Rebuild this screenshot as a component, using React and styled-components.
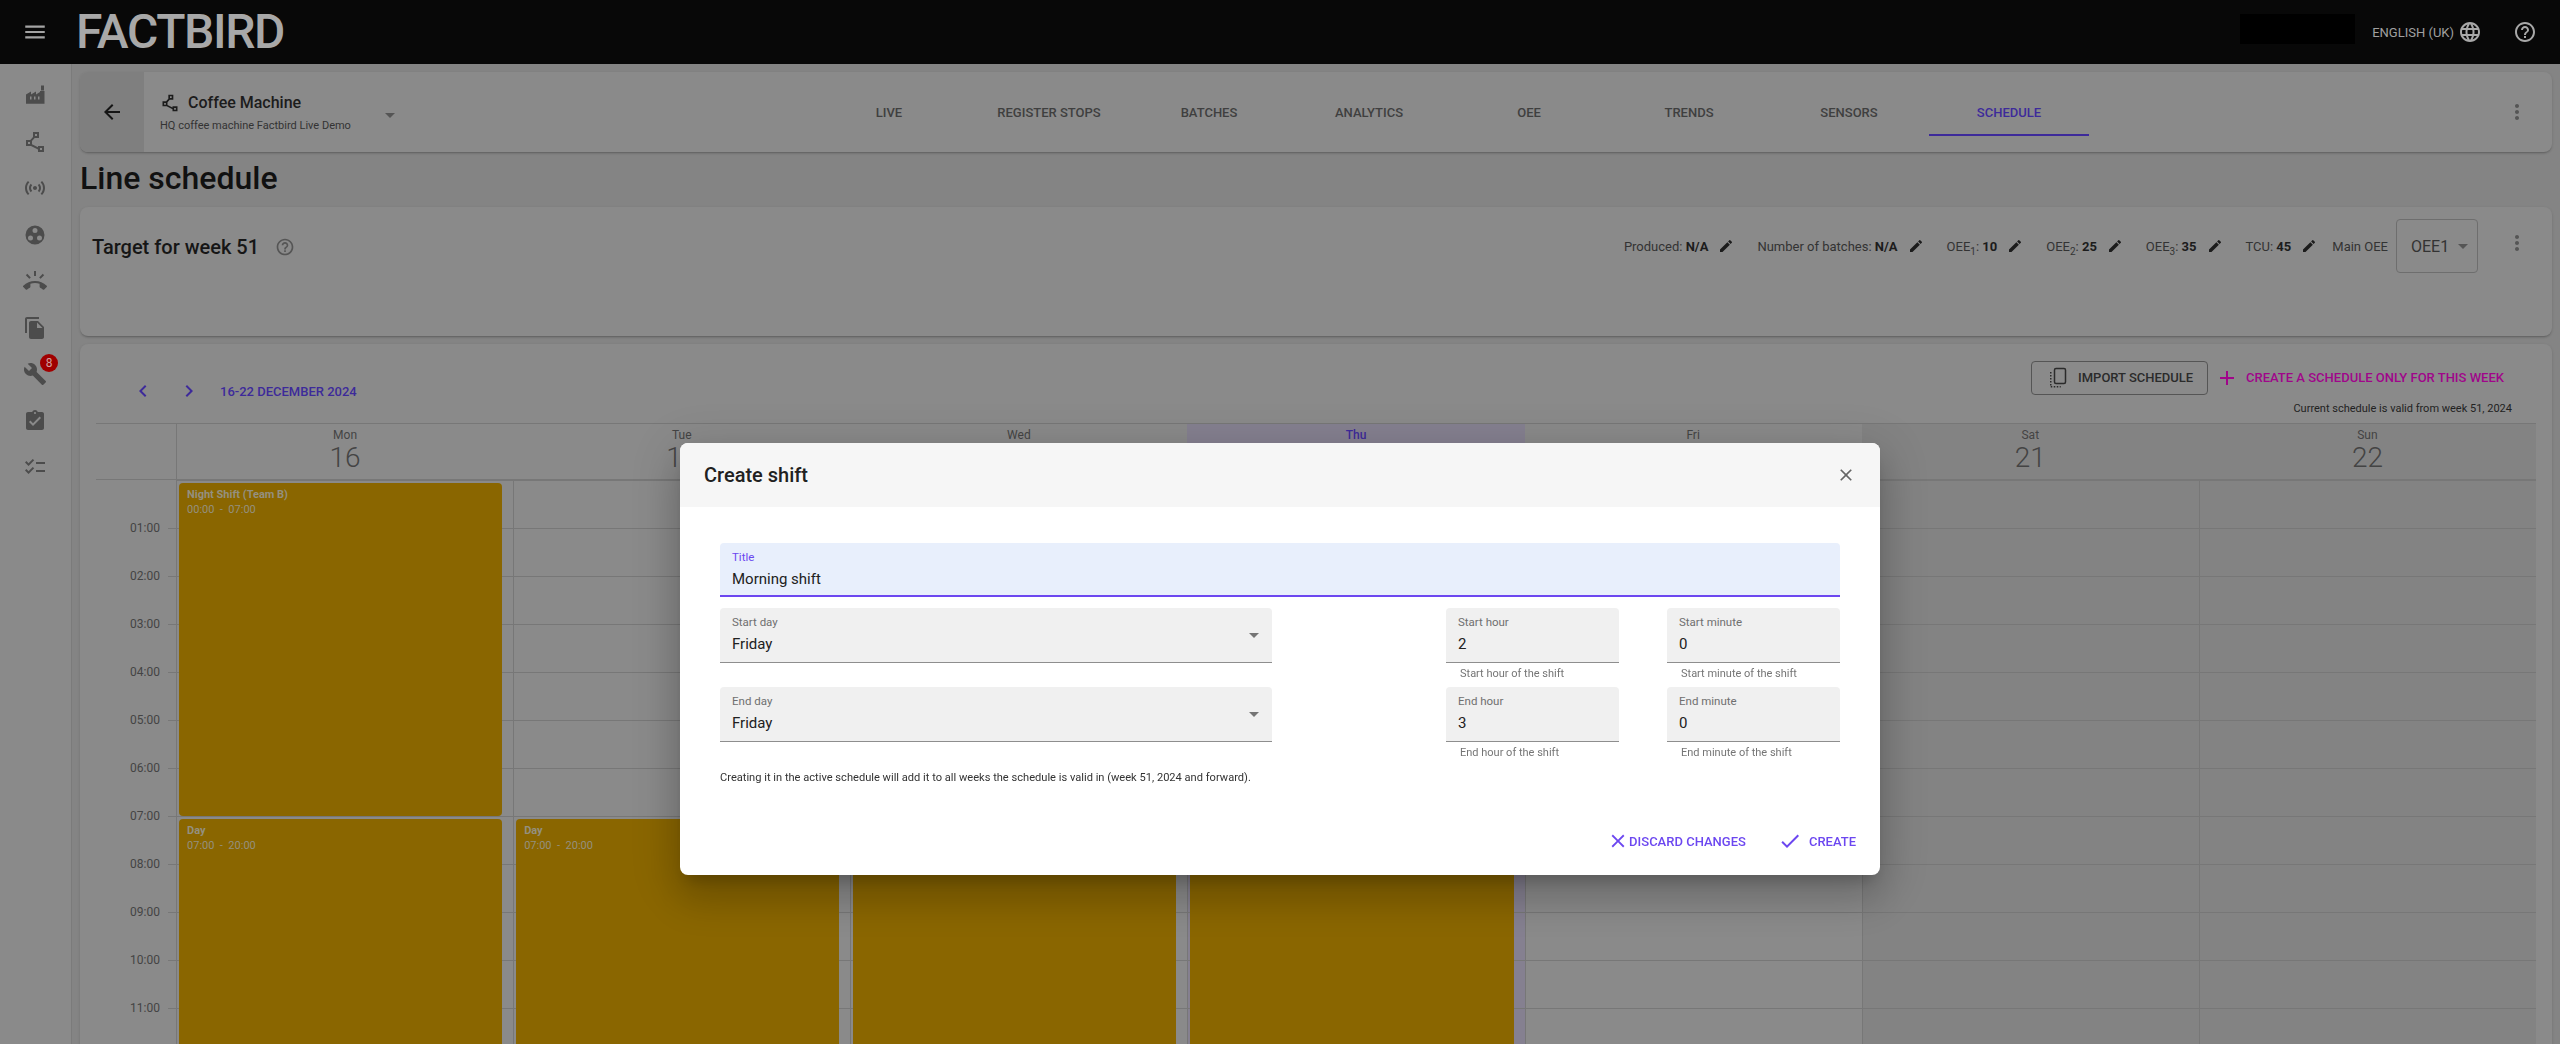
import React from 'react';
import styled, { createGlobalStyle } from 'styled-components';
import {
  MdMenu, MdArrowBack, MdMoreVert, MdEdit, MdHelpOutline, MdLanguage, MdClose, MdCheck, MdAdd,
  MdChevronLeft, MdChevronRight, MdArrowDropDown, MdSensors, MdRingVolume, MdFileCopy, MdBuild,
  MdAssignmentTurnedIn, MdChecklist, MdOutlinePolyline,
} from 'react-icons/md';

const GlobalStyle = createGlobalStyle`
  html, body { margin: 0; padding: 0; background: #fff; overflow: hidden; }
  body { font-family: Roboto, "Liberation Sans", sans-serif; }
  * { box-sizing: border-box; }
`;

const Page = styled.div`
  width: 2560px;
  height: 1044px;
  overflow: hidden;
  display: flex;
  flex-direction: column;
  background: #848484;
  color: #222;
`;

const TopBar = styled.header`
  flex: none;
  height: 64px;
  display: flex;
  align-items: center;
  background: #080808;
  color: #a4a4a4;
  padding: 0 23px 0 22px;
`;

const Logo = styled.span`
  margin-left: 28px;
  font-size: 48px;
  font-weight: 500;
  line-height: 64px;
  letter-spacing: -1.4px;
  color: #a8a8a8;
`;

const RedactedBox = styled.div`
  width: 115px;
  height: 30px;
  margin-left: auto;
  margin-top: -7px;
  background: #000;
`;

const Lang = styled.span`
  margin-left: 17px;
  font-size: 13px;
  color: #a0a0a0;
  text-transform: uppercase;
`;

const TopIcons = styled.span`
  display: inline-flex;
  align-items: center;
  margin-left: ${(p) => p.$gap}px;
  color: #a8a8a8;
`;

const Body = styled.div`
  flex: 1;
  display: flex;
  min-height: 0;
`;

const Sidebar = styled.nav`
  flex: none;
  width: 72px;
  padding-top: 8px;
  background: #8a8a8a;
  border-right: 1px solid #7b7b7b;
  display: flex;
  flex-direction: column;
  align-items: center;
`;

const NavItem = styled.div`
  position: relative;
  flex: none;
  height: 46.5px;
  width: 100%;
  padding-right: 1px;
  display: flex;
  align-items: center;
  justify-content: center;
  color: #4c4c4c;
`;

const Badge = styled.span`
  position: absolute;
  top: 3px;
  left: 40px;
  width: 18px;
  height: 18px;
  border-radius: 50%;
  background: #a00000;
  color: #cfa0a0;
  font-size: 12px;
  line-height: 18px;
  text-align: center;
`;

const Content = styled.main`
  flex: 1;
  min-width: 0;
  padding: 8px 8px 0;
  display: flex;
  flex-direction: column;
`;

const Card = styled.section`
  flex: none;
  background: #8a8a8a;
  border-radius: 8px;
  box-shadow: 0 2px 2px -1px rgba(0, 0, 0, 0.2), 0 1px 3px rgba(0, 0, 0, 0.12);
`;

const HeaderCard = styled(Card)`
  height: 80px;
  display: flex;
  overflow: hidden;
`;

const BackArea = styled.div`
  flex: none;
  width: 64px;
  background: #7f7f7f;
  display: flex;
  align-items: center;
  justify-content: center;
  color: #151515;
`;

const LineSelect = styled.div`
  position: relative;
  flex: none;
  width: 665px;
  padding: 19px 0 0 16px;
`;

const LineName = styled.div`
  display: flex;
  align-items: center;
  gap: 8px;
  font-size: 16px;
  font-weight: 500;
  line-height: 24px;
  color: #1c1c1c;
`;

const LineSub = styled.div`
  margin-top: 3px;
  font-size: 11px;
  line-height: 16px;
  color: #333;
`;

const LineArrow = styled.span`
  position: absolute;
  left: 234px;
  top: 31px;
  display: flex;
  color: #555;
`;

const Tabs = styled.div`
  display: flex;
`;

const Tab = styled.div`
  position: relative;
  width: 160px;
  display: flex;
  align-items: center;
  justify-content: center;
  font-size: 13px;
  font-weight: 500;
  text-transform: uppercase;
  color: ${(p) => (p.$active ? '#3d2a9a' : '#3f3f3f')};
  &::after {
    content: '';
    display: ${(p) => (p.$active ? 'block' : 'none')};
    position: absolute;
    left: 0;
    right: 0;
    bottom: 16px;
    height: 2px;
    background: #3d2a9a;
  }
`;

const DotsButton = styled.span`
  margin-left: auto;
  margin-right: ${(p) => p.$right}px;
  align-self: center;
  display: flex;
  color: #555;
`;

const PageTitle = styled.h1`
  flex: none;
  margin: 0 0 2px;
  height: 53px;
  font-size: 32px;
  font-weight: 500;
  line-height: 53px;
  color: #111;
`;

const TargetCard = styled(Card)`
  height: 129px;
  padding: 12px 0 0 12px;
  margin-bottom: 8px;
  display: flex;
  align-items: flex-start;
`;

const TargetTitle = styled.div`
  height: 56px;
  display: flex;
  align-items: center;
  gap: 16px;
  font-size: 20px;
  font-weight: 500;
  color: #161616;
  svg { color: #555; }
`;

const Stats = styled.div`
  margin-left: auto;
  height: 54px;
  display: flex;
  align-items: center;
  font-size: 13px;
  color: #333;
`;

const Stat = styled.div`
  display: flex;
  align-items: center;
  margin-right: ${(p) => p.$gap || 23}px;
  white-space: pre;
  b { font-weight: 700; color: #1c1c1c; }
  sub { font-size: 10px; line-height: 0; }
`;

const PencilIcon = styled(MdEdit)`
  margin-left: 10px;
  color: #1c1c1c;
`;

const MainLabel = styled.span`
  margin-right: 8px;
`;

const OeeSelect = styled.div`
  width: 82px;
  height: 54px;
  border: 1px solid #6e6e6e;
  border-radius: 4px;
  padding-left: 14px;
  display: flex;
  align-items: center;
  font-size: 16px;
  color: #333;
  svg { color: #555; margin-left: 2px; }
`;

const TargetDots = styled(DotsButton)`
  margin-left: 27px;
  margin-top: 12px;
  align-self: flex-start;
`;

const CalendarCard = styled(Card)`
  flex: 1;
  min-height: 0;
  margin-bottom: -8px;
  padding-top: 17px;
  overflow: hidden;
`;

const CalendarBar = styled.div`
  display: flex;
  align-items: flex-start;
  height: 34px;
  padding: 0 48px 0 40px;
`;

const DateNav = styled.div`
  margin-top: 18px;
  display: flex;
  align-items: center;
`;

const NavChevron = styled.span`
  width: 46px;
  display: flex;
  justify-content: center;
  color: #3d2a9a;
`;

const DateRange = styled.span`
  margin-left: 8px;
  font-size: 13px;
  font-weight: 500;
  text-transform: uppercase;
  color: #3d2a9a;
`;

const ImportButton = styled.button`
  margin-left: auto;
  flex: none;
  width: 177px;
  height: 34px;
  padding: 0 0 1px 14px;
  display: flex;
  align-items: center;
  gap: 8px;
  background: transparent;
  border: 1px solid #555;
  border-radius: 4px;
  font-family: inherit;
  font-size: 13px;
  font-weight: 500;
  color: #2b2b2b;
  text-transform: uppercase;
`;

const CreateOnce = styled.span`
  margin-left: 7px;
  height: 33px;
  display: flex;
  align-items: center;
  gap: 7px;
  font-size: 13px;
  font-weight: 500;
  color: #a0068a;
  text-transform: uppercase;
`;

const ValidNote = styled.div`
  padding-right: 40px;
  margin-top: 5px;
  height: 23px;
  font-size: 11px;
  line-height: 18px;
  text-align: right;
  color: #222;
`;

const Grid = styled.div`
  margin: 0 16px;
  display: grid;
  grid-template-columns: 80px repeat(7, 1fr);
`;

const HeadCorner = styled.div`
  height: 57px;
  border-top: 1px solid #777;
  border-bottom: 1px solid #777;
`;

const HeadCell = styled(HeadCorner)`
  text-align: center;
  padding-top: 2px;
  background: ${(p) => p.$bg || 'transparent'};
  border-left: ${(p) => (p.$first ? '1px solid #777' : '0')};
  color: ${(p) => (p.$today ? '#3d2a9a' : '#444')};
`;

const DayName = styled.div`
  font-size: 12px;
  line-height: 18px;
  font-weight: ${(p) => (p.$today ? 500 : 400)};
`;

const DayNumber = styled.div`
  font-size: 28px;
  line-height: 28px;
  font-weight: 300;
`;

const TimeGutter = styled.div`
  padding-top: 39px;
`;

const TimeRow = styled.div`
  height: 48px;
  display: flex;
  justify-content: flex-end;
  gap: 8px;
  font-size: 12px;
  line-height: 18px;
  color: #444;
  &::after {
    content: '';
    width: 8px;
    height: 1px;
    margin-top: 9px;
    background: #777;
  }
`;

const DayColumn = styled.div`
  position: relative;
  height: 720px;
  border-left: 1px solid #777;
  background-color: ${(p) => p.$bg || 'transparent'};
  background-image: linear-gradient(#777 1px, transparent 1px);
  background-size: 100% 48px;
`;

const Shift = styled.div`
  position: absolute;
  left: 2px;
  right: 11px;
  top: ${(p) => p.$start * 48 + 3}px;
  height: ${(p) => (p.$end - p.$start) * 48 - 3}px;
  padding: 4px 8px;
  border-radius: 4px;
  background: #8a6600;
  color: #94907f;
  font-size: 11px;
  line-height: 15px;
`;

const ShiftTitle = styled.div`
  font-weight: 700;
`;

const Overlay = styled.div`
  position: fixed;
  top: 0;
  left: 0;
  width: 2560px;
  height: 1044px;
  padding-top: 443px;
  display: flex;
  justify-content: center;
  align-items: flex-start;
`;

const Modal = styled.div`
  width: 1200px;
  height: 432px;
  background: #fff;
  border-radius: 8px;
  overflow: hidden;
  box-shadow: 0 11px 15px -7px rgba(0, 0, 0, 0.2), 0 24px 38px 3px rgba(0, 0, 0, 0.14), 0 9px 46px 8px rgba(0, 0, 0, 0.12);
`;

const ModalHeader = styled.div`
  height: 64px;
  padding: 0 24px 0 24px;
  display: flex;
  align-items: center;
  justify-content: space-between;
  background: #f6f6f6;
  font-size: 20px;
  font-weight: 500;
  color: #212121;
  svg { color: #666; }
`;

const ModalBody = styled.div`
  padding: 36px 40px 0;
`;

const Field = styled.div`
  height: ${(p) => (p.$focused ? 54 : 55)}px;
  padding: 5px 12px 0;
  position: relative;
  border-radius: 4px 4px 0 0;
  background: ${(p) => (p.$focused ? '#e8effc' : '#f0f0f0')};
  border-bottom: ${(p) => (p.$focused ? '2px solid #6c47f0' : '1px solid #8e8e8e')};
`;

const FieldLabel = styled.div`
  font-size: 11.500px;
  line-height: 18px;
  color: ${(p) => (p.$focused ? '#6c47f0' : '#6f6f6f')};
`;

const FieldValue = styled.div`
  margin-top: 1px;
  font-size: 15px;
  line-height: 24px;
  color: #212121;
`;

const SelectArrow = styled.span`
  position: absolute;
  right: 6px;
  top: 15px;
  display: flex;
  color: #757575;
`;

const FormRow = styled.div`
  display: flex;
  justify-content: space-between;
  height: 79px;
`;

const TitleWrap = styled.div`
  margin-bottom: 11px;
`;

const DayField = styled.div`
  width: 552px;
`;

const TimePair = styled.div`
  display: flex;
  gap: 48px;
`;

const TimeField = styled.div`
  width: 173px;
`;

const Helper = styled.div`
  margin-top: 2px;
  padding-left: 14px;
  font-size: 11px;
  line-height: 18px;
  color: #757575;
`;

const Note = styled.p`
  margin: 3px 0 0;
  font-size: 11.100px;
  line-height: 18px;
  color: #333;
`;

const Actions = styled.div`
  margin: 36px -16px 0 0;
  height: 36px;
  display: flex;
  justify-content: flex-end;
  align-items: center;
  gap: 32px;
`;

const ActionButton = styled.button`
  display: flex;
  align-items: center;
  gap: ${(p) => p.$gap}px;
  padding: 0;
  border: 0;
  background: none;
  font-family: inherit;
  font-size: 13px;
  font-weight: 500;
  color: #6c47f0;
  text-transform: uppercase;
`;

function FactoryIcon() {
  return (
    <svg width="24" height="24" viewBox="0 0 24 24" fill="currentColor">
      <path
        fillRule="evenodd"
        d="M3 20.700V11.500l5-3v3l5-3v3l4-2.500V8h4.500v12.700zM7 13.500v3h1.500v-3zM11 13.500v3h1.500v-3zM15 13.500v3h1.500v-3z"
      />
      <path d="M18 2.500h3v5h-3z" />
    </svg>
  );
}

function DotsCircleIcon() {
  return (
    <svg width="24" height="24" viewBox="0 0 24 24" fill="currentColor">
      <path
        fillRule="evenodd"
        d="M12 2.500a9.500 9.500 0 1 0 0 19a9.500 9.500 0 0 0 0-19zM12 5a2.500 2.500 0 1 1 0 5a2.500 2.500 0 0 1 0-5zM7.500 12.500a2.500 2.500 0 1 1 0 5a2.500 2.500 0 0 1 0-5zM16.500 12.500a2.500 2.500 0 1 1 0 5a2.500 2.500 0 0 1 0-5z"
      />
    </svg>
  );
}

function ImportIcon() {
  return (
    <svg width="24" height="24" viewBox="0 0 24 24" fill="none" stroke="currentColor" strokeWidth="1.5">
      <rect x="8.500" y="2.500" width="11" height="15" rx="1.500" />
      <path d="M4.750 6v13.500M4.750 20.750h10" strokeDasharray="1.500 1.500" />
    </svg>
  );
}

const navIcons = [
  <FactoryIcon />,
  <MdOutlinePolyline size={24} />,
  <MdSensors size={24} />,
  <DotsCircleIcon />,
  <MdRingVolume size={24} />,
  <MdFileCopy size={24} />,
  <MdBuild size={24} />,
  <MdAssignmentTurnedIn size={24} />,
  <MdChecklist size={24} />,
];

const tabs = ['Live', 'Register stops', 'Batches', 'Analytics', 'OEE', 'Trends', 'Sensors', 'Schedule'];

const days = [
  { name: 'Mon', num: 16, shifts: [{ title: 'Night Shift (Team B)', start: 0, end: 7 }, { title: 'Day', start: 7, end: 20 }] },
  { name: 'Tue', num: 17, shifts: [{ title: 'Day', start: 7, end: 20 }] },
  { name: 'Wed', num: 18, shifts: [{ title: 'Day', start: 7, end: 20 }] },
  { name: 'Thu', num: 19, today: true, shifts: [{ title: 'Day', start: 7, end: 20 }] },
  { name: 'Fri', num: 20, shifts: [] },
  { name: 'Sat', num: 21, weekend: true, shifts: [] },
  { name: 'Sun', num: 22, weekend: true, shifts: [] },
];

const hours = ['01', '02', '03', '04', '05', '06', '07', '08', '09', '10', '11'];

const pad = (n) => String(n).padStart(2, '0');

const dayBg = (d) => {
  if (d.today) return '#858090';
  if (d.weekend) return '#838383';
  return null;
};

function SelectField({ label, value }) {
  return (
    <Field>
      <FieldLabel>{label}</FieldLabel>
      <FieldValue>{value}</FieldValue>
      <SelectArrow><MdArrowDropDown size={24} /></SelectArrow>
    </Field>
  );
}

function NumberField({ label, value, help }) {
  return (
    <TimeField>
      <Field>
        <FieldLabel>{label}</FieldLabel>
        <FieldValue>{value}</FieldValue>
      </Field>
      <Helper>{help}</Helper>
    </TimeField>
  );
}

export default function App() {
  return (
    <>
      <GlobalStyle />
      <Page>
        <TopBar>
          <MdMenu size={26} />
          <Logo>FACTBIRD</Logo>
          <RedactedBox />
          <Lang>English (UK)</Lang>
          <TopIcons $gap={4}><MdLanguage size={24} /></TopIcons>
          <TopIcons $gap={31}><MdHelpOutline size={24} /></TopIcons>
        </TopBar>
        <Body>
          <Sidebar>
            {navIcons.map((icon, i) => (
              <NavItem key={i}>
                {icon}
                {i === 6 && <Badge>8</Badge>}
              </NavItem>
            ))}
          </Sidebar>
          <Content>
            <HeaderCard>
              <BackArea><MdArrowBack size={24} /></BackArea>
              <LineSelect>
                <LineName><MdOutlinePolyline size={20} />Coffee Machine</LineName>
                <LineSub>HQ coffee machine Factbird Live Demo</LineSub>
                <LineArrow><MdArrowDropDown size={24} /></LineArrow>
              </LineSelect>
              <Tabs>
                {tabs.map((t) => <Tab key={t} $active={t === 'Schedule'}>{t}</Tab>)}
              </Tabs>
              <DotsButton $right={23}><MdMoreVert size={24} /></DotsButton>
            </HeaderCard>
            <PageTitle>Line schedule</PageTitle>
            <TargetCard>
              <TargetTitle>Target for week 51<MdHelpOutline size={20} /></TargetTitle>
              <Stats>
                <Stat>Produced: <b>N/A</b><PencilIcon size={16} /></Stat>
                <Stat>Number of batches: <b>N/A</b><PencilIcon size={16} /></Stat>
                <Stat><span>OEE<sub>1</sub>: </span><b>10</b><PencilIcon size={16} /></Stat>
                <Stat><span>OEE<sub>2</sub>: </span><b>25</b><PencilIcon size={16} /></Stat>
                <Stat><span>OEE<sub>3</sub>: </span><b>35</b><PencilIcon size={16} /></Stat>
                <Stat $gap={15}>TCU: <b>45</b><PencilIcon size={16} /></Stat>
                <MainLabel>Main OEE</MainLabel>
                <OeeSelect>OEE1<MdArrowDropDown size={24} /></OeeSelect>
              </Stats>
              <TargetDots $right={23}><MdMoreVert size={24} /></TargetDots>
            </TargetCard>
            <CalendarCard>
              <CalendarBar>
                <DateNav>
                  <NavChevron><MdChevronLeft size={24} /></NavChevron>
                  <NavChevron><MdChevronRight size={24} /></NavChevron>
                  <DateRange>16-22 December 2024</DateRange>
                </DateNav>
                <ImportButton><ImportIcon />Import schedule</ImportButton>
                <CreateOnce><MdAdd size={24} />Create a schedule only for this week</CreateOnce>
              </CalendarBar>
              <ValidNote>Current schedule is valid from week 51, 2024</ValidNote>
              <Grid>
                <HeadCorner />
                {days.map((d, i) => (
                  <HeadCell key={d.name} $first={i === 0} $today={d.today} $bg={dayBg(d)}>
                    <DayName $today={d.today}>{d.name}</DayName>
                    <DayNumber>{d.num}</DayNumber>
                  </HeadCell>
                ))}
                <TimeGutter>
                  {hours.map((h) => <TimeRow key={h}>{h}:00</TimeRow>)}
                </TimeGutter>
                {days.map((d) => (
                  <DayColumn key={d.name} $bg={dayBg(d)}>
                    {d.shifts.map((s) => (
                      <Shift key={s.title} $start={s.start} $end={s.end}>
                        <ShiftTitle>{s.title}</ShiftTitle>
                        <div>{pad(s.start)}:00 &nbsp;-&nbsp; {pad(s.end)}:00</div>
                      </Shift>
                    ))}
                  </DayColumn>
                ))}
              </Grid>
            </CalendarCard>
          </Content>
        </Body>
      </Page>
      <Overlay>
        <Modal>
          <ModalHeader>Create shift<MdClose size={20} /></ModalHeader>
          <ModalBody>
            <TitleWrap>
              <Field $focused>
                <FieldLabel $focused>Title</FieldLabel>
                <FieldValue>Morning shift</FieldValue>
              </Field>
            </TitleWrap>
            <FormRow>
              <DayField><SelectField label="Start day" value="Friday" /></DayField>
              <TimePair>
                <NumberField label="Start hour" value="2" help="Start hour of the shift" />
                <NumberField label="Start minute" value="0" help="Start minute of the shift" />
              </TimePair>
            </FormRow>
            <FormRow>
              <DayField><SelectField label="End day" value="Friday" /></DayField>
              <TimePair>
                <NumberField label="End hour" value="3" help="End hour of the shift" />
                <NumberField label="End minute" value="0" help="End minute of the shift" />
              </TimePair>
            </FormRow>
            <Note>Creating it in the active schedule will add it to all weeks the schedule is valid in (week 51, 2024 and forward).</Note>
            <Actions>
              <ActionButton $gap={0}><MdClose size={22} />Discard changes</ActionButton>
              <ActionButton $gap={7}><MdCheck size={24} />Create</ActionButton>
            </Actions>
          </ModalBody>
        </Modal>
      </Overlay>
    </>
  );
}
